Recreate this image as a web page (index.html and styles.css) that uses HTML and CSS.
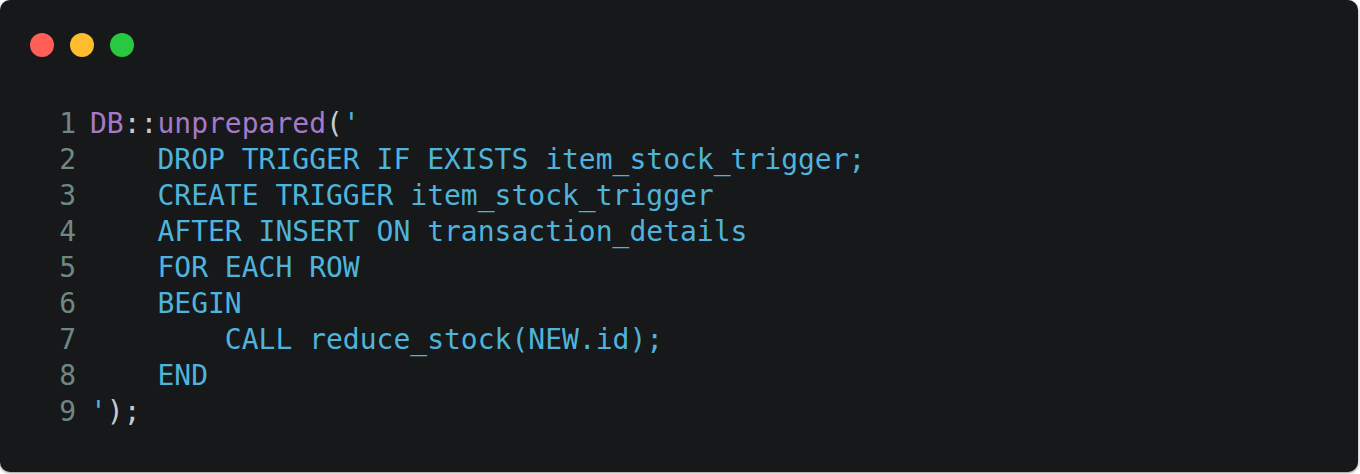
FILE: index.html
```html
<!DOCTYPE html>
<html>
<head>
<meta charset="utf-8">
<link rel="stylesheet" href="styles.css">
</head>
<body>
<div class="card">
  <div class="dots">
    <span class="dot red"></span>
    <span class="dot yellow"></span>
    <span class="dot green"></span>
  </div>
  <div class="code">
    <div class="line"><span class="ln">1</span><span class="src"><span class="fn">DB</span><span class="pu">::</span><span class="fn">unprepared</span><span class="pu">(</span><span class="kw">'</span></span></div>
    <div class="line"><span class="ln">2</span><span class="src kw">    DROP TRIGGER IF EXISTS item_stock_trigger;</span></div>
    <div class="line"><span class="ln">3</span><span class="src kw">    CREATE TRIGGER item_stock_trigger</span></div>
    <div class="line"><span class="ln">4</span><span class="src kw">    AFTER INSERT ON transaction_details</span></div>
    <div class="line"><span class="ln">5</span><span class="src kw">    FOR EACH ROW</span></div>
    <div class="line"><span class="ln">6</span><span class="src kw">    BEGIN</span></div>
    <div class="line"><span class="ln">7</span><span class="src kw">        CALL reduce_stock(NEW.id);</span></div>
    <div class="line"><span class="ln">8</span><span class="src kw">    END</span></div>
    <div class="line"><span class="ln">9</span><span class="src"><span class="kw">'</span><span class="pu">);</span></span></div>
  </div>
</div>
</body>
</html>
```

FILE: styles.css
```css
html, body {
  margin: 0;
  padding: 0;
  background: #ffffff;
}
body {
  width: 1360px;
  height: 474px;
  overflow: hidden;
}
.card {
  width: 1358px;
  height: 472px;
  background: #17181a;
  border-radius: 10px;
  box-shadow: 0 1px 3px rgba(0, 0, 0, 0.45);
  box-sizing: border-box;
  padding-top: 33px;
}
.dots {
  display: flex;
  gap: 16px;
  padding-left: 30px;
}
.dot {
  width: 24px;
  height: 24px;
  border-radius: 50%;
  display: block;
}
.red { background: #ff5f57; }
.yellow { background: #febc2e; }
.green { background: #28c840; }
.code {
  margin-top: 49px;
  padding-left: 59px;
  font-family: "DejaVu Sans Mono", monospace;
  font-size: 28px;
  line-height: 36px;
}
.line {
  display: flex;
  white-space: pre;
}
.ln {
  width: 17px;
  text-align: right;
  margin-right: 14px;
  color: #6f8883;
}
.fn { color: #a679c8; }
.pu { color: #c9cccf; }
.kw { color: #4fb4db; }
```
